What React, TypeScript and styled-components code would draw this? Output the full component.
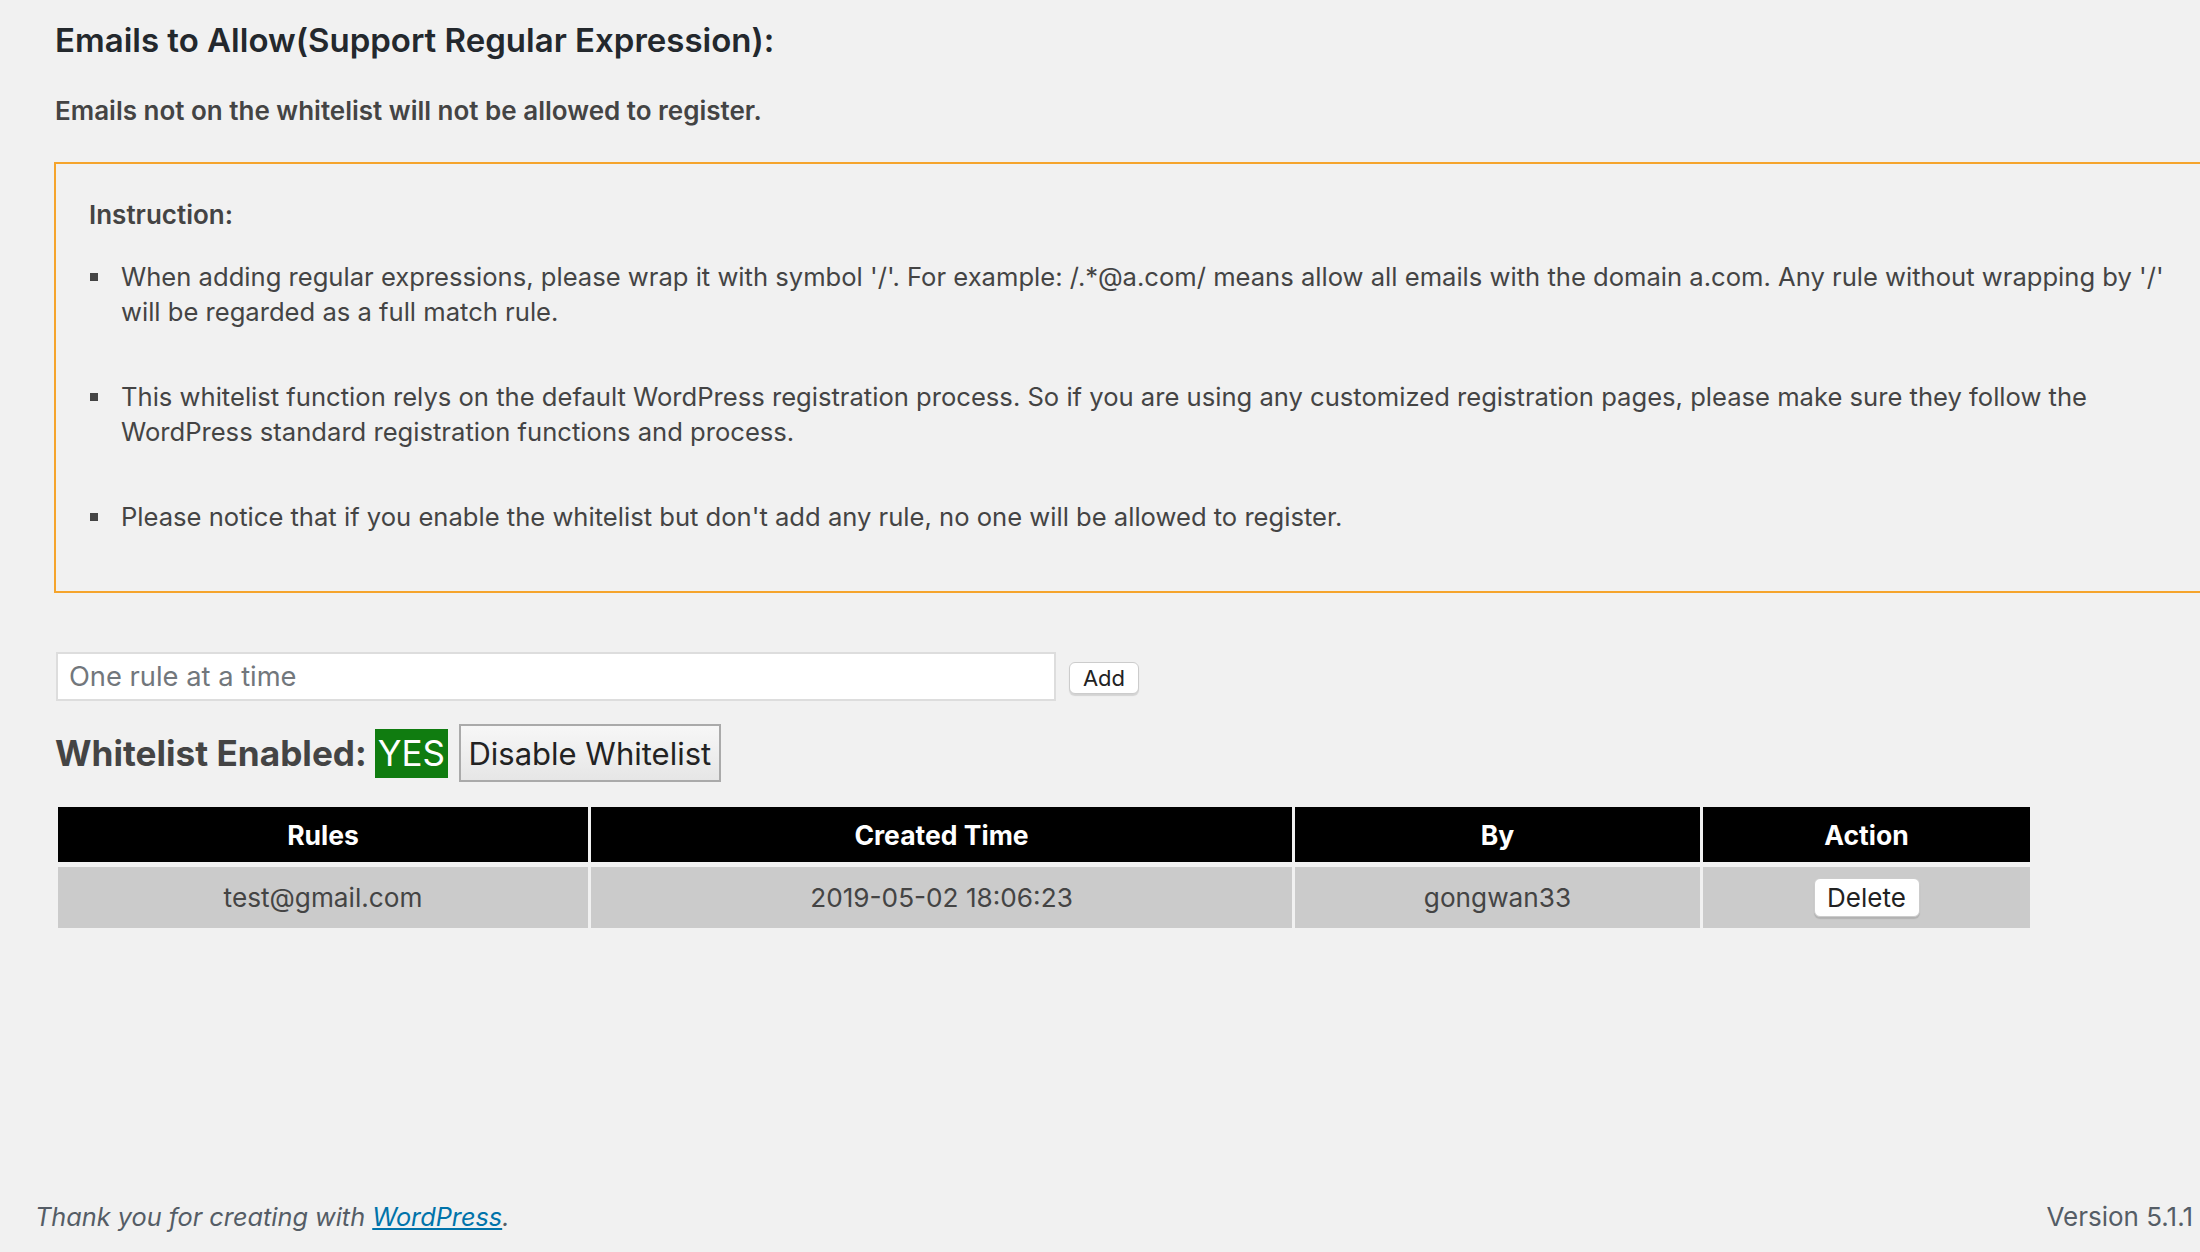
import styled, { createGlobalStyle } from "styled-components";

const GlobalStyle = createGlobalStyle`
  html, body {
    margin: 0;
    padding: 0;
    background: #f1f1f1;
    overflow: hidden;
  }
  body {
    font-family: Inter, "Noto Sans", "Liberation Sans", sans-serif;
    color: #444;
  }
  * {
    box-sizing: border-box;
  }
`;

const Page = styled.div`
  display: flex;
  flex-direction: column;
  min-height: 100vh;
  width: 2200px;
`;

const Content = styled.div`
  padding: 20px 0 0 55px;
`;

const Title = styled.h2`
  margin: 0;
  font-size: 33px;
  line-height: 40px;
  font-weight: 600;
  color: #23282d;
`;

const Lead = styled.p`
  margin: 35px 0 0;
  font-size: 26px;
  line-height: 32px;
  font-weight: 600;
  color: #444;
`;

const Notice = styled.div`
  margin: 35px 0 0 -1px;
  width: 2200px;
  border: 2px solid #f5a42c;
  padding: 33px 0 57px 33px;
`;

const NoticeTitle = styled.div`
  font-size: 26px;
  line-height: 35px;
  font-weight: 600;
  color: #444;
`;

const List = styled.ul`
  list-style: none;
  margin: 27px 0 0;
  padding: 0;
  width: 2090px;
  display: flex;
  flex-direction: column;
  gap: 50px;
`;

const Item = styled.li`
  display: flex;
  gap: 23px;
  font-size: 25.6px;
  line-height: 35px;
  color: #444;
`;

const Marker = styled.span`
  flex: none;
  width: 8px;
  height: 8px;
  margin: 14px 0 0 1px;
  background: #444;
`;

const AddRow = styled.div`
  display: flex;
  align-items: center;
  margin-top: 59px;
`;

const RuleInput = styled.input`
  width: 1000px;
  height: 49px;
  margin-left: 1px;
  border: 2px solid #ddd;
  background: #fff;
  padding: 0 11px;
  font-family: inherit;
  font-size: 27.3px;
  color: #32373c;
  outline: none;

  &::placeholder {
    color: #72777c;
  }
`;

const SmallButton = styled.button<{ $w: number; $h: number; $fs: number }>`
  width: ${(p) => p.$w}px;
  height: ${(p) => p.$h}px;
  padding: 0;
  background: #fff;
  border: 1px solid #ccc;
  border-radius: 6px;
  box-shadow: 0 2px 1px rgba(0, 0, 0, 0.12);
  font-family: inherit;
  font-size: ${(p) => p.$fs}px;
  color: #222;
`;

const AddButton = styled(SmallButton)`
  margin-left: 13px;
  margin-top: 3px;
`;

const StatusRow = styled.div`
  display: flex;
  align-items: center;
  margin-top: 23px;
  height: 58px;
`;

const StatusLabel = styled.span`
  font-size: 35.2px;
  font-weight: 700;
  color: #444;
`;

const Badge = styled.span`
  margin-left: 8px;
  width: 73px;
  height: 49px;
  display: flex;
  align-items: center;
  justify-content: center;
  background: #107c10;
  color: #fff;
  font-size: 35px;
`;

const ToggleButton = styled.button`
  margin-left: 11px;
  width: 262px;
  height: 58px;
  padding: 0;
  border: 2px solid #aaa;
  background: linear-gradient(#f7f7f7, #e6e6e6);
  font-family: inherit;
  font-size: 31px;
  color: #222;
`;

const Table = styled.table`
  margin-top: 20px;
  border-collapse: separate;
  border-spacing: 3px 5px;
`;

const Th = styled.th<{ $w: number }>`
  width: ${(p) => p.$w}px;
  height: 55px;
  padding: 0;
  background: #000;
  color: #fff;
  font-size: 26.5px;
  font-weight: 700;
  text-align: center;
`;

const Td = styled.td`
  height: 61px;
  padding: 0;
  background: #cbcbcb;
  color: #444;
  font-size: 26.2px;
  text-align: center;
`;

const Footer = styled.footer`
  margin-top: auto;
  display: flex;
  justify-content: space-between;
  align-items: baseline;
  padding: 0 7px 18px 35px;
  font-size: 26px;
  line-height: 35px;
  color: #555d66;
`;

const Thanks = styled.span`
  font-style: italic;
  font-size: 25.3px;

  a {
    color: #0073aa;
    text-decoration: underline;
  }
`;

const rules = [
  { rule: "test@gmail.com", created: "2019-05-02 18:06:23", by: "gongwan33" },
];

export default function App() {
  return (
    <>
      <GlobalStyle />
      <Page>
        <Content>
          <Title>Emails to Allow(Support Regular Expression):</Title>
          <Lead>Emails not on the whitelist will not be allowed to register.</Lead>
          <Notice>
            <NoticeTitle>Instruction:</NoticeTitle>
            <List>
              <Item>
                <Marker />
                <span>
                  When adding regular expressions, please wrap it with symbol
                  '/'. For example: /.*@a.com/ means allow all emails with the
                  domain a.com. Any rule without wrapping by '/' will be
                  regarded as a full match rule.
                </span>
              </Item>
              <Item>
                <Marker />
                <span>
                  This whitelist function relys on the default WordPress
                  registration process. So if you are using any customized
                  registration pages, please make sure they follow the
                  WordPress standard registration functions and process.
                </span>
              </Item>
              <Item>
                <Marker />
                <span>
                  Please notice that if you enable the whitelist but don't add
                  any rule, no one will be allowed to register.
                </span>
              </Item>
            </List>
          </Notice>
          <AddRow>
            <RuleInput type="text" placeholder="One rule at a time" />
            <AddButton $w={70} $h={32} $fs={22}>
              Add
            </AddButton>
          </AddRow>
          <StatusRow>
            <StatusLabel>Whitelist Enabled:</StatusLabel>
            <Badge>YES</Badge>
            <ToggleButton>Disable Whitelist</ToggleButton>
          </StatusRow>
          <Table>
            <thead>
              <tr>
                <Th $w={530}>Rules</Th>
                <Th $w={701}>Created Time</Th>
                <Th $w={405}>By</Th>
                <Th $w={327}>Action</Th>
              </tr>
            </thead>
            <tbody>
              {rules.map((r) => (
                <tr key={r.rule}>
                  <Td>{r.rule}</Td>
                  <Td>{r.created}</Td>
                  <Td>{r.by}</Td>
                  <Td>
                    <SmallButton $w={106} $h={39} $fs={26}>
                      Delete
                    </SmallButton>
                  </Td>
                </tr>
              ))}
            </tbody>
          </Table>
        </Content>
        <Footer>
          <Thanks>
            Thank you for creating with <a href="#">WordPress</a>.
          </Thanks>
          <span>Version 5.1.1</span>
        </Footer>
      </Page>
    </>
  );
}
